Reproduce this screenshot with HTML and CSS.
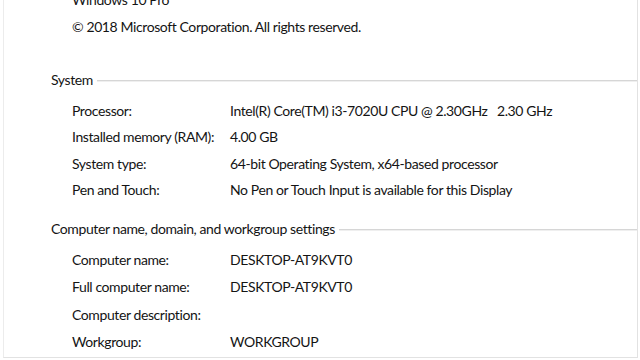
FILE: index.html
```html
<!DOCTYPE html>
<html lang="en">
<head>
    <meta charset="UTF-8">
    <title>System</title>
    <link rel="stylesheet" href="styles.css">
</head>
<body>
    <div class="window">
        <div class="edition">
            <div class="line">Windows 10 Pro</div>
            <div class="line">&copy; 2018 Microsoft Corporation. All rights reserved.</div>
        </div>

        <div class="group">
            <div class="group-title"><span>System</span><div class="rule"></div></div>
            <div class="rows sys-rows">
                <div class="label">Processor:</div>
                <div class="value">Intel(R) Core(TM) i3-7020U CPU @ 2.30GHz&nbsp;&nbsp;&nbsp;2.30 GHz</div>
                <div class="label">Installed memory (RAM):</div>
                <div class="value">4.00 GB</div>
                <div class="label">System type:</div>
                <div class="value">64-bit Operating System, x64-based processor</div>
                <div class="label">Pen and Touch:</div>
                <div class="value">No Pen or Touch Input is available for this Display</div>
            </div>
        </div>

        <div class="group second">
            <div class="group-title"><span>Computer name, domain, and workgroup settings</span><div class="rule"></div></div>
            <div class="rows pc-rows">
                <div class="label">Computer name:</div>
                <div class="value">DESKTOP-AT9KVT0</div>
                <div class="label">Full computer name:</div>
                <div class="value">DESKTOP-AT9KVT0</div>
                <div class="label">Computer description:</div>
                <div class="value"></div>
                <div class="label">Workgroup:</div>
                <div class="value">WORKGROUP</div>
            </div>
        </div>
    </div>
</body>
</html>
```

FILE: styles.css
```css
body {
  margin: 0;
  background-color: #fff;
  font-family: Lato, sans-serif;
  font-size: 14px;
  letter-spacing: -0.4px;
  color: #141414;
  overflow: hidden;
}

.window {
  display: flow-root;
  overflow: hidden;
  height: 357px;
  margin: 0 2px 0 3px;
  border-left: 1px solid #ececec;
  border-right: 1px solid #e2e2e2;
  border-bottom: 1px solid #e2e2e2;
}

.edition {
  margin-top: -14px;
  padding-left: 68px;
}

.edition .line {
  line-height: 27px;
}

.group {
  margin-top: 30px;
  padding-left: 47px;
}

.group.second {
  margin-top: 16px;
}

.group-title {
  display: flex;
  align-items: center;
  line-height: 20px;
}

.group-title .rule {
  flex: 1;
  margin-left: 4px;
  margin-top: 2px;
  border-top: 1px solid #d6d6d6;
  border-bottom: 1px solid #efefef;
}

.rows {
  display: grid;
  grid-template-columns: 158px auto;
  padding-left: 21px;
  margin-top: 8px;
}

.sys-rows > div {
  line-height: 26.3px;
}

.pc-rows {
  margin-top: 7px;
}

.pc-rows > div {
  line-height: 27.3px;
}

.label,
.value {
  white-space: nowrap;
}
```
